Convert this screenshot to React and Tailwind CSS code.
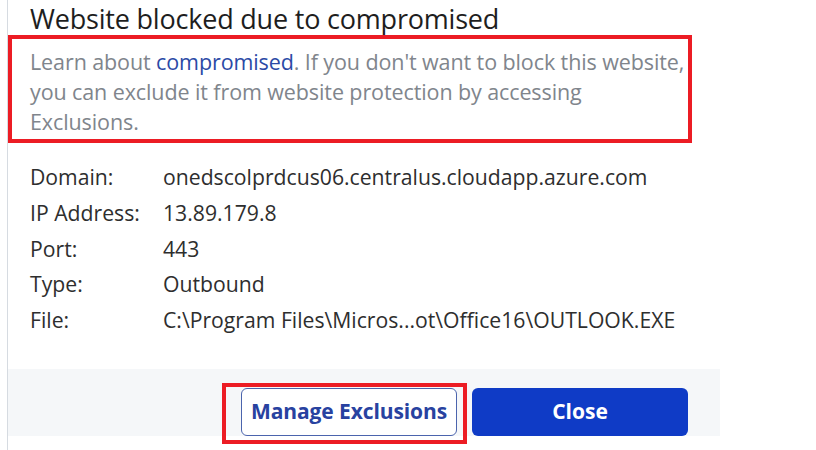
const details = [
  ['Domain:', 'onedscolprdcus06.centralus.cloudapp.azure.com'],
  ['IP Address:', '13.89.179.8'],
  ['Port:', '443'],
  ['Type:', 'Outbound'],
  ['File:', 'C:\\Program Files\\Micros...ot\\Office16\\OUTLOOK.EXE'],
];

const App = () => {
  return (
    <div className="relative w-[816px] h-[450px] bg-white overflow-hidden font-['Open_Sans',sans-serif]">
      <div className="ml-[7px] w-[713px] h-full border-l border-[#d6dbe1] flex flex-col">
        <h1 className="pl-[22px] pt-[2px] text-[27px] leading-[34px] text-[#1e1e1e] tracking-[-0.2px]">
          Website blocked due to compromised
        </h1>

        <p className="mt-[11px] pl-[22px] pr-[20px] text-[21.5px] leading-[30px] text-[#80858c] tracking-[-0.1px]">
          Learn about <span className="text-[#2b4aa6]">compromised</span>. If you don't want to block this website,
          <br />
          you can exclude it from website protection by accessing
          <br />
          Exclusions.
        </p>

        <div className="mt-[22px] pl-[22px] flex flex-col">
          {details.map(([label, value]) => (
            <div key={label} className="flex h-[35.8px] items-center text-[21.2px] text-[#2e2e2e]">
              <span className="w-[133px] shrink-0">{label}</span>
              <span>{value}</span>
            </div>
          ))}
        </div>

        <div className="mt-auto mb-[14px] h-[67px] bg-[#f5f7f9] flex items-end justify-end gap-[15px] pr-[32px]">
          <button className="w-[216px] h-[48px] rounded-[6px] border border-[#4b64ad] bg-white text-[21px] font-bold text-[#2842a0] tracking-[-0.1px]">
            Manage Exclusions
          </button>
          <button className="w-[216px] h-[48px] rounded-[6px] bg-[#0f3bc6] text-[21px] font-bold text-white">
            Close
          </button>
        </div>
      </div>

      <div className="absolute left-[8px] top-[35px] w-[684px] h-[108px] border-[4px] border-[#ec1c24]" />
      <div className="absolute left-[222px] top-[383px] w-[245px] h-[61px] border-[4px] border-[#ec1c24]" />
    </div>
  );
};

export default App;
